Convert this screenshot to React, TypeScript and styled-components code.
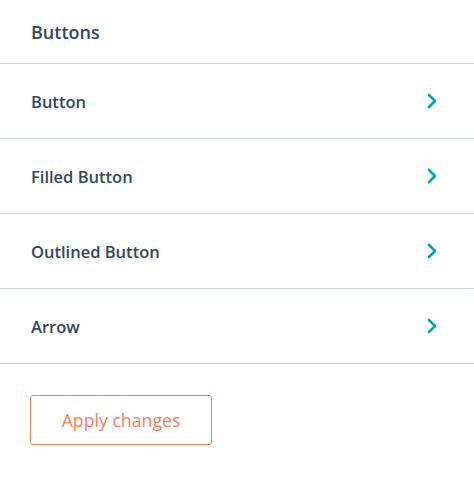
import React from "react";
import styled, { createGlobalStyle } from "styled-components";

const Global = createGlobalStyle`
  body { margin: 0; background: #fff; font-family: "Open Sans", Lato, sans-serif; }
`;

const Panel = styled.div`
  width: 474px;
  display: flex;
  flex-direction: column;
`;

const Header = styled.div`
  height: 64px;
  box-sizing: border-box;
  padding: 0 31px;
  display: flex;
  align-items: center;
  border-bottom: 1px solid #cbd6e2;
  color: #33475b;
  font-size: 18px;
  font-weight: 600;
`;

const Row = styled.div`
  height: 75px;
  box-sizing: border-box;
  padding: 0 37px 0 31px;
  display: flex;
  align-items: center;
  justify-content: space-between;
  border-bottom: 1px solid #cbd6e2;
  color: #33475b;
  font-size: 16.5px;
  font-weight: 600;
`;

const Footer = styled.div`
  padding: 31px 30px;
`;

const ApplyButton = styled.button`
  width: 182px;
  height: 50px;
  border: 1px solid #ff7a59;
  border-radius: 3px;
  background: #fff;
  color: #ff7a59;
  font-family: "Open Sans", Lato, sans-serif;
  font-size: 17.7px;
  font-weight: 400;
  cursor: pointer;
`;

const Chevron = () => (
  <svg width="10" height="16" viewBox="0 0 10 16">
    <path d="M2 2 L8 8 L2 14" fill="none" stroke="#00a4bd" strokeWidth="2.6" strokeLinecap="round" strokeLinejoin="round" />
  </svg>
);

const items = ["Button", "Filled Button", "Outlined Button", "Arrow"];

export default function App() {
  return (
    <>
      <Global />
      <Panel>
        <Header>Buttons</Header>
        {items.map((t) => (
          <Row key={t}>
            <span>{t}</span>
            <Chevron />
          </Row>
        ))}
        <Footer>
          <ApplyButton>Apply changes</ApplyButton>
        </Footer>
      </Panel>
    </>
  );
}
